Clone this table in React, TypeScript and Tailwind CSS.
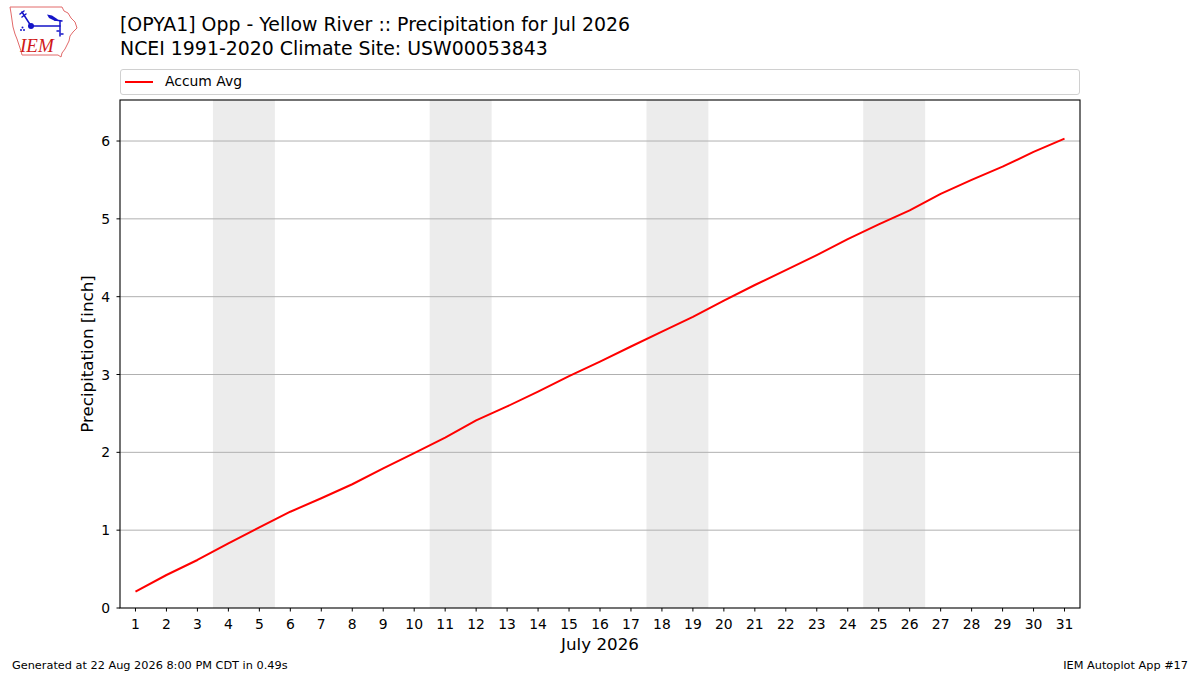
import React from 'react';

const days = Array.from({ length: 31 }, (_, i) => i + 1);

// accumulated average precip (inch) per day
const accum = [
  0.21, 0.424, 0.617, 0.83, 1.035, 1.237, 1.41, 1.59, 1.795, 1.99, 2.19, 2.41, 2.59, 2.78, 2.98, 3.165,
  3.36, 3.55, 3.74, 3.95, 4.15, 4.34, 4.535, 4.74, 4.93, 5.11, 5.32, 5.5, 5.67, 5.86, 6.03,
];

const weekends = [4, 11, 18, 25];

const LEFT = 120;
const RIGHT = 1080;
const TOP = 100;
const BOTTOM = 608;

const xOf = (d: number) => LEFT + ((d - 0.5) * (RIGHT - LEFT)) / 31;
const yOf = (v: number) => BOTTOM - v * 77.83;

// drawn in page coordinates via the viewBox offset
const IemLogo = () => (
  <svg width="72" height="54" viewBox="7 5 72 54">
    {/* Iowa outline */}
    <path
      d="M10 7 L62 7 L64 11 L68 13 L71 18 L75 22 L77 28 L73 32 L70 36 L69 41 L67 45 L65 49 L62 53 L61 57 L58 55 L22 55 L21 51 L19 45 L17 39 L15 34 L13 27 L12 20 L11 13 Z"
      fill="none"
      stroke="#e26a6a"
      strokeWidth="1"
    />
    {/* wind vane */}
    <g stroke="#1414c8" strokeWidth="1.5" fill="none" strokeLinecap="round">
      <path d="M22 12 L31 26" />
      <path d="M20 14 L24 11" />
      <path d="M22 17 L26 14" />
      <path d="M31 26 L60 26" />
      <path d="M55 20 L62 21" />
      <path d="M60 21 L60 36" />
      <path d="M57 31 L59 31" />
      <path d="M61 34 L63 34" />
    </g>
    <circle cx="31" cy="26" r="3" fill="#1414c8" />
    <path d="M47 14.5 L52 15.5 L58 19.5 L55 21 L49 18 Z" fill="#1414c8" />
    <circle cx="22.5" cy="27.5" r="1" fill="#1414c8" />
    <circle cx="21" cy="30" r="1" fill="#1414c8" />
    <circle cx="24" cy="30" r="1" fill="#1414c8" />
    <text
      x="20"
      y="52"
      fill="#d01818"
      fontSize="19"
      fontStyle="italic"
      fontFamily="'Liberation Serif', serif"
    >
      IEM
    </text>
  </svg>
);

const Chart = () => {
  const linePoints = accum.map((v, i) => `${xOf(i + 1).toFixed(2)},${yOf(v).toFixed(2)}`).join(' ');
  return (
    <svg width="1200" height="562" viewBox="0 95 1200 562" className="block">
      {/* weekend shading */}
      {weekends.map((d) => (
        <rect key={d} x={xOf(d) - 15.48} y={TOP} width={30.97 * 2} height={BOTTOM - TOP} fill="#ececec" />
      ))}
      {/* y grid + ticks */}
      {[0, 1, 2, 3, 4, 5, 6].map((v) => (
        <g key={v}>
          {v > 0 && <line x1={LEFT} x2={RIGHT} y1={yOf(v)} y2={yOf(v)} stroke="#b0b0b0" strokeWidth="1" />}
          <line x1={LEFT - 3.5} x2={LEFT} y1={yOf(v)} y2={yOf(v)} stroke="#000" strokeWidth="1" />
          <text
            x={LEFT - 10}
            y={yOf(v) + 5}
            textAnchor="end"
            fontSize="13.9"
            fontFamily="'DejaVu Sans', sans-serif"
            fill="#000"
          >
            {v}
          </text>
        </g>
      ))}
      {/* x ticks */}
      {days.map((d) => (
        <g key={d}>
          <line x1={xOf(d)} x2={xOf(d)} y1={BOTTOM} y2={BOTTOM + 3.5} stroke="#000" strokeWidth="1" />
          <text
            x={xOf(d)}
            y={628.5}
            textAnchor="middle"
            fontSize="13.9"
            fontFamily="'DejaVu Sans', sans-serif"
            fill="#000"
          >
            {d}
          </text>
        </g>
      ))}
      {/* data */}
      <polyline points={linePoints} fill="none" stroke="#ff0000" strokeWidth="2" strokeLinejoin="round" />
      {/* frame */}
      <rect x={LEFT} y={TOP} width={RIGHT - LEFT} height={BOTTOM - TOP} fill="none" stroke="#000" strokeWidth="1.1" />
      {/* axis labels */}
      <text
        x={600}
        y={650}
        textAnchor="middle"
        fontSize="16.7"
        fontFamily="'DejaVu Sans', sans-serif"
        fill="#000"
      >
        July 2026
      </text>
      <text
        transform="translate(93 354) rotate(-90)"
        textAnchor="middle"
        fontSize="16.7"
        fontFamily="'DejaVu Sans', sans-serif"
        fill="#000"
      >
        Precipitation [inch]
      </text>
    </svg>
  );
};

export default function App() {
  return (
    <div className="w-[1200px] h-[675px] bg-white flex flex-col overflow-hidden font-['DejaVu_Sans',sans-serif] text-black">
      {/* Header */}
      <div className="h-[69px] flex items-start">
        <div className="ml-[7px] mt-[5px]">
          <IemLogo />
        </div>
        <div className="ml-[41px] mt-[12px] text-[18.9px] leading-[24px]">
          <div>[OPYA1] Opp - Yellow River :: Precipitation for Jul 2026</div>
          <div>NCEI 1991-2020 Climate Site: USW00053843</div>
        </div>
      </div>

      {/* Legend */}
      <div className="ml-[120px] w-[960px] h-[26px] border border-[#d0d0d0] rounded-[3px] flex items-center">
        <div className="ml-[4px] w-[28px] h-[2px] bg-[#ff0000]" />
        <span className="ml-[12px] text-[13.9px] leading-none">Accum Avg</span>
      </div>

      {/* Chart */}
      <Chart />

      {/* Footer */}
      <div className="flex justify-between px-[12px] text-[11.3px] leading-[18px]">
        <span>Generated at 22 Aug 2026 8:00 PM CDT in 0.49s</span>
        <span>IEM Autoplot App #17</span>
      </div>
    </div>
  );
}
